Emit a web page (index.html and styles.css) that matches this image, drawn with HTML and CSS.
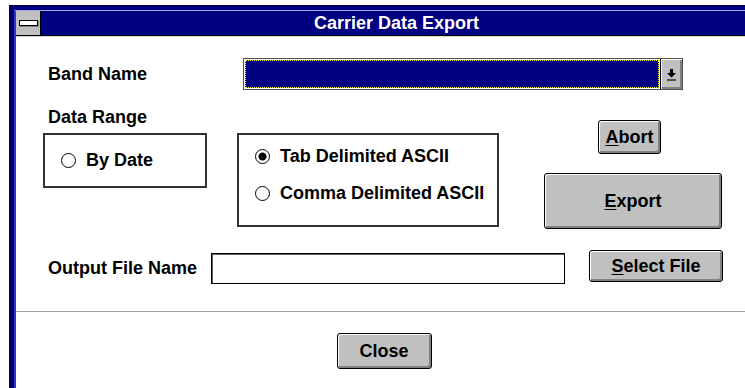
FILE: index.html
```html
<!DOCTYPE html>
<html lang="en">
<head>
    <meta charset="UTF-8">
    <meta name="viewport" content="width=device-width, initial-scale=1.0">
    <title>Carrier Data Export</title>
    <link rel="stylesheet" href="styles.css">
</head>
<body>
    <div class="window">
        <div class="frame">
            <div class="titlebar">
                <div class="sysmenu"><span class="sysmenu-bar"></span></div>
                <div class="title">Carrier Data Export</div>
            </div>
            <div class="dialog">
                <div class="band-row">
                    <label class="band-label" for="band">Band Name</label>
                    <div class="combo" id="band">
                        <div class="combo-field"><div class="combo-focus"></div></div>
                        <div class="combo-btn">
                            <svg width="11" height="13" viewBox="0 0 11 13">
                                <path d="M4 1h3v4h3l-4.5 4.5L1 5h3z" fill="#000"/>
                                <rect x="1" y="11" width="9" height="2" fill="#505050"/>
                            </svg>
                        </div>
                    </div>
                </div>

                <div class="range-row">
                    <div class="range-col">
                        <div class="range-label">Data Range</div>
                        <div class="range-boxes">
                            <div class="group group-date">
                                <span class="radio"></span>By Date
                            </div>
                            <div class="group group-format">
                                <div class="option"><span class="radio checked"></span>Tab Delimited ASCII</div>
                                <div class="option"><span class="radio"></span>Comma Delimited ASCII</div>
                            </div>
                        </div>
                    </div>
                    <div class="actions">
                        <button class="btn btn-abort"><u>A</u>bort</button>
                        <button class="btn btn-export"><u>E</u>xport</button>
                    </div>
                </div>

                <div class="output-row">
                    <label class="output-label" for="outfile">Output File Name</label>
                    <input type="text" id="outfile" class="file-input">
                    <button class="btn btn-select"><u>S</u>elect File</button>
                </div>

                <div class="separator"></div>

                <div class="close-row">
                    <button class="btn btn-close">Close</button>
                </div>
            </div>
        </div>
    </div>
</body>
</html>
```

FILE: styles.css
```css
html, body {
    margin: 0;
    padding: 0;
    overflow: hidden;
    background-color: #fff;
}
body {
    font-family: "Liberation Sans", Arial, sans-serif;
    font-weight: bold;
    font-size: 18px;
    color: #000;
}
.window {
    margin: 5px 0 0 9px;
    width: 741px;
    background-color: #000080;
    border-top: 1px solid #000040;
    border-left: 2px solid #00005a;
    padding: 4px 0 0 3px;
    box-sizing: border-box;
}
.frame {
    width: 736px;
    background-color: #fff;
    border-top: 1px solid #a8a8e0;
    border-left: 2px solid #3535c0;
}
.titlebar {
    display: flex;
    height: 24px;
    background-color: #000080;
    border-bottom: 1px solid #000;
}
.sysmenu {
    width: 24px;
    background-color: #c0c0c0;
    border-right: 1px solid #000;
    display: flex;
    align-items: center;
    justify-content: center;
}
.sysmenu-bar {
    width: 17px;
    height: 4px;
    background-color: #fff;
    border: 1px solid #000;
    box-shadow: 1px 1px 0 #808080;
}
.title {
    flex: 1;
    text-align: center;
    color: #fff;
    line-height: 24px;
}
.dialog {
    border-top: 1px solid #d0d0d0;
    padding: 21px 0 19px;
}

/* band name */
.band-row {
    display: flex;
    align-items: center;
    padding-left: 32px;
}
.band-label {
    width: 195px;
}
.combo {
    display: flex;
    width: 440px;
    height: 32px;
    box-sizing: border-box;
    border: 1px solid #505050;
    background-color: #fff;
}
.combo-field {
    flex: 1;
    margin: 1px;
    background-color: #000080;
}
.combo-focus {
    height: 100%;
    box-sizing: border-box;
    border: 1px dotted #ffff00;
}
.combo-btn {
    width: 21px;
    background-color: #c0c0c0;
    border-left: 1px solid #000;
    box-shadow: inset 1px 1px 0 #fff, inset -2px -2px 0 #808080;
    display: flex;
    align-items: center;
    justify-content: center;
}

/* data range */
.range-row {
    display: flex;
    margin-top: 17px;
    padding-left: 27px;
}
.range-label {
    padding-left: 5px;
    line-height: 20px;
}
.range-boxes {
    display: flex;
    align-items: flex-start;
    gap: 30px;
    margin-top: 6px;
}
.group {
    box-sizing: border-box;
    border: 2px solid #333;
}
.group-date {
    width: 164px;
    height: 55px;
    display: flex;
    align-items: center;
    padding-left: 16px;
}
.group-format {
    width: 262px;
    height: 94px;
    padding: 11px 0 0 16px;
    display: flex;
    flex-direction: column;
    gap: 17px;
}
.option {
    display: flex;
    align-items: center;
    line-height: 20px;
}
.radio {
    flex: none;
    width: 15px;
    height: 15px;
    box-sizing: border-box;
    border: 1px solid #000;
    border-radius: 50%;
    background-color: #fff;
    margin-right: 10px;
}
.radio.checked {
    background: radial-gradient(circle, #000 0 3.5px, #fff 4.5px);
}

/* buttons */
.actions {
    display: flex;
    flex-direction: column;
    align-items: flex-start;
    margin-left: 45px;
    padding-top: 13px;
}
.btn {
    font: inherit;
    color: #000;
    background-color: #c0c0c0;
    border: 1px solid #000;
    border-radius: 3px;
    box-shadow: inset 1px 1px 0 #fff, inset -2px -2px 0 #808080;
    padding: 0;
}
.btn u {
    text-decoration-thickness: 1px;
    text-underline-offset: 2px;
}
.btn-abort {
    width: 63px;
    height: 34px;
    margin-left: 54px;
}
.btn-export {
    width: 178px;
    height: 56px;
    margin-top: 19px;
}

/* output file */
.output-row {
    display: flex;
    align-items: flex-start;
    margin-top: 21px;
    padding-left: 32px;
}
.output-label {
    width: 163px;
    line-height: 20px;
    margin-top: 8px;
}
.file-input {
    width: 354px;
    height: 31px;
    box-sizing: border-box;
    margin: 3px 0 0;
    border: 1px solid #000;
    box-shadow: inset 1px 1px 0 #606060;
    background-color: #fff;
    padding: 0 4px;
    font: inherit;
}
.btn-select {
    width: 134px;
    height: 32px;
    margin-left: 24px;
}

.separator {
    height: 1px;
    background-color: #a0a0a0;
    margin-top: 27px;
}
.close-row {
    display: flex;
    justify-content: center;
    margin-top: 21px;
}
.btn-close {
    width: 95px;
    height: 36px;
}
```
